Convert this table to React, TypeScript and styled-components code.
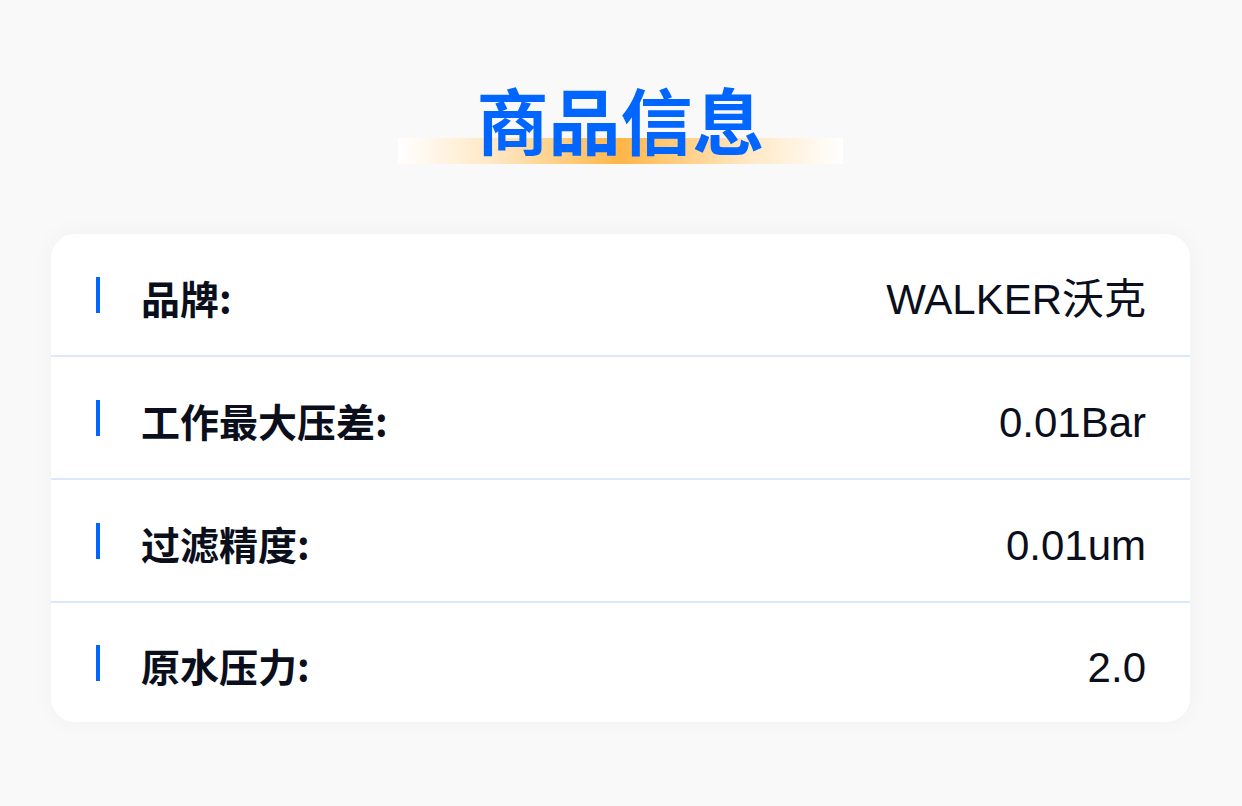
import React from "react";
import styled, { createGlobalStyle } from "styled-components";

const GlobalStyle = createGlobalStyle`
  html, body {
    margin: 0;
    padding: 0;
    background: #f9f9f9;
  }
  body {
    font-family: "Liberation Sans", "Noto Sans CJK SC", sans-serif;
  }
`;

const Page = styled.div`
  width: 1242px;
  min-height: 806px;
  box-sizing: border-box;
  padding: 80px 52px 0 51px;
  display: flex;
  flex-direction: column;
  align-items: center;
`;

const TitleWrap = styled.div`
  width: 445px;
  height: 84px;
  display: flex;
  justify-content: center;
  align-items: flex-start;
  background-image: linear-gradient(
    90deg,
    #ffffff 0%,
    #ffe7c2 22%,
    #ffc46a 42%,
    #ffb547 50%,
    #ffc46a 58%,
    #ffe7c2 78%,
    #ffffff 100%
  );
  background-repeat: no-repeat;
  background-size: 100% 26px;
  background-position: left bottom;
`;

const Title = styled.h1`
  margin: 0;
  font-family: "Noto Sans CJK SC", sans-serif;
  font-weight: 700;
  font-size: 72px;
  line-height: 76px;
  letter-spacing: 0;
  color: #0066ff;
`;

const Card = styled.div`
  margin-top: 70px;
  width: 100%;
  background: #ffffff;
  border-radius: 24px;
  box-shadow: 0 0 24px rgba(0, 0, 0, 0.035);
  display: flex;
  flex-direction: column;
  overflow: hidden;
`;

const Row = styled.div<{ $last?: boolean }>`
  height: ${(p) => (p.$last ? "119px" : "123px")};
  box-sizing: border-box;
  padding: 0 44px 0 45px;
  display: flex;
  align-items: center;
  border-bottom: ${(p) => (p.$last ? "none" : "2px solid #dbe7fd")};
`;

const Marker = styled.span`
  width: 4px;
  height: 36px;
  background: #0066ff;
  flex-shrink: 0;
`;

const Label = styled.span`
  margin-left: 41px;
  font-family: "Noto Sans CJK SC", sans-serif;
  font-weight: 700;
  font-size: 39px;
  line-height: 1;
  color: #0b0f1c;
  padding-top: 6px;
`;

const Value = styled.span`
  margin-left: auto;
  font-family: "Liberation Sans", "Noto Sans CJK SC", sans-serif;
  font-weight: 400;
  font-size: 42px;
  line-height: 1;
  color: #0b0f1c;
  padding-top: 10px;
`;

const rows = [
  { label: "品牌:", value: "WALKER沃克" },
  { label: "工作最大压差:", value: "0.01Bar" },
  { label: "过滤精度:", value: "0.01um" },
  { label: "原水压力:", value: "2.0" },
];

export default function App() {
  return (
    <>
      <GlobalStyle />
      <Page>
        <TitleWrap>
          <Title>商品信息</Title>
        </TitleWrap>
        <Card>
          {rows.map((r, i) => (
            <Row key={r.label} $last={i === rows.length - 1}>
              <Marker />
              <Label>{r.label}</Label>
              <Value>{r.value}</Value>
            </Row>
          ))}
        </Card>
      </Page>
    </>
  );
}
